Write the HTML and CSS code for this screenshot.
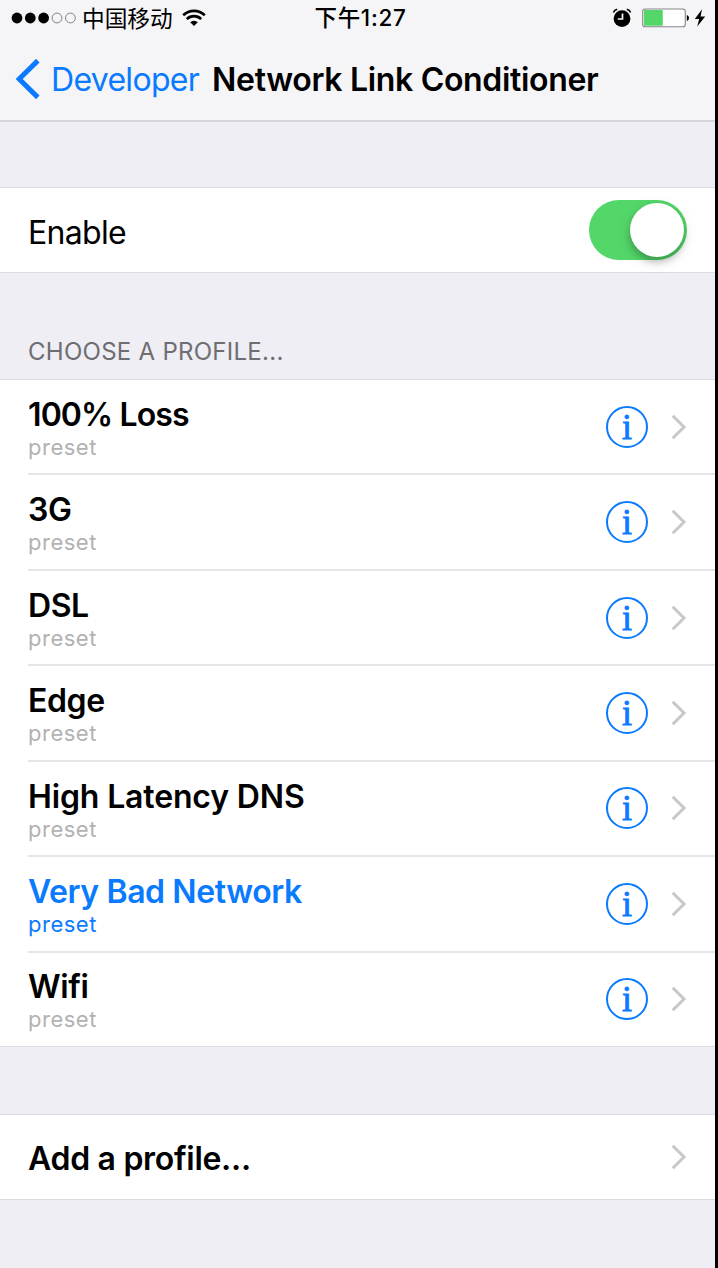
FILE: index.html
```html
<!DOCTYPE html>
<html lang="en">
<head>
    <meta charset="UTF-8">
    <meta name="viewport" content="width=device-width, initial-scale=1.0">
    <title>Network Link Conditioner</title>
    <link rel="stylesheet" href="styles.css">
</head>
<body>

    <header class="header">
        <div class="status-bar">
            <div class="status-left">
                <svg class="signal" width="66" height="12" viewBox="0 0 66 12">
                    <circle cx="6" cy="6" r="5.4"/>
                    <circle cx="19.3" cy="6" r="5.4"/>
                    <circle cx="32.6" cy="6" r="5.4"/>
                    <circle cx="46" cy="6" r="4.9" fill="none" stroke="#777" stroke-width="0.9"/>
                    <circle cx="59.4" cy="6" r="4.9" fill="none" stroke="#777" stroke-width="0.9"/>
                </svg>
                <span class="carrier">中国移动</span>
                <svg class="wifi" width="24" height="18" viewBox="0 0 24 18">
                    <path d="M1.2 6.2 A15.5 15.5 0 0 1 22.8 6.2" fill="none" stroke="#000" stroke-width="2.7"/>
                    <path d="M4.8 10.1 A10.3 10.3 0 0 1 19.2 10.1" fill="none" stroke="#000" stroke-width="2.6"/>
                    <path d="M8.2 13.2 A5.5 5.5 0 0 1 15.8 13.2 L12 17 Z"/>
                </svg>
            </div>
            <span class="time">下午1:27</span>
            <div class="status-right">
                <svg class="alarm" width="20" height="20" viewBox="0 0 20 20">
                    <circle cx="10" cy="10.6" r="8.4"/>
                    <path d="M1.4 4.6 Q2.3 2 5.2 1.3 M14.8 1.3 Q17.7 2 18.6 4.6" fill="none" stroke="#000" stroke-width="1.5"/>
                    <path d="M10.5 5.4 V11 H5.8" fill="none" stroke="#f5f5f7" stroke-width="1.7"/>
                </svg>
                <svg class="battery" width="48" height="20" viewBox="0 0 48 20">
                    <rect x="0.7" y="1" width="42.6" height="17.8" rx="2.6" fill="#fff" stroke="#85858a" stroke-width="1.1"/>
                    <rect x="1.9" y="2.1" width="18.9" height="15.6" rx="1" fill="#53d769"/>
                    <path d="M44.8 6.9 Q47 7.6 47 9.9 Q47 12.2 44.8 12.9 Z"/>
                </svg>
                <svg class="bolt" width="12" height="18" viewBox="0 0 12 18">
                    <path d="M8 0.3 L0.8 10 H5.2 L3.2 17.6 L11.2 7.4 H6.6 Z"/>
                </svg>
            </div>
        </div>
        <nav class="nav-bar">
            <svg class="back-arrow" width="26" height="40" viewBox="0 0 26 40">
                <path d="M22.8 1.6 L4.2 20 L22.8 38.4" fill="none" stroke="#0a7aff" stroke-width="5"/>
            </svg>
            <span class="back">Developer</span>
            <h1 class="title">Network Link Conditioner</h1>
        </nav>
    </header>

    <section class="group enable">
        <span class="label">Enable</span>
        <div class="switch"><div class="knob"></div></div>
    </section>

    <h2 class="group-title">CHOOSE A PROFILE...</h2>

    <section class="group profiles">
        <div class="profile">
            <div class="text">
                <div class="name loss">100% Loss</div>
                <div class="preset">preset</div>
            </div>
            <span class="info">i</span>
            <svg class="chevron" viewBox="0 0 16 26"><path d="M1.7 1.7 L13 13 L1.7 24.3"/></svg>
        </div>
        <div class="profile">
            <div class="text">
                <div class="name">3G</div>
                <div class="preset">preset</div>
            </div>
            <span class="info">i</span>
            <svg class="chevron" viewBox="0 0 16 26"><path d="M1.7 1.7 L13 13 L1.7 24.3"/></svg>
        </div>
        <div class="profile">
            <div class="text">
                <div class="name">DSL</div>
                <div class="preset">preset</div>
            </div>
            <span class="info">i</span>
            <svg class="chevron" viewBox="0 0 16 26"><path d="M1.7 1.7 L13 13 L1.7 24.3"/></svg>
        </div>
        <div class="profile">
            <div class="text">
                <div class="name">Edge</div>
                <div class="preset">preset</div>
            </div>
            <span class="info">i</span>
            <svg class="chevron" viewBox="0 0 16 26"><path d="M1.7 1.7 L13 13 L1.7 24.3"/></svg>
        </div>
        <div class="profile">
            <div class="text">
                <div class="name latency">High Latency DNS</div>
                <div class="preset">preset</div>
            </div>
            <span class="info">i</span>
            <svg class="chevron" viewBox="0 0 16 26"><path d="M1.7 1.7 L13 13 L1.7 24.3"/></svg>
        </div>
        <div class="profile selected">
            <div class="text">
                <div class="name">Very Bad Network</div>
                <div class="preset">preset</div>
            </div>
            <span class="info">i</span>
            <svg class="chevron" viewBox="0 0 16 26"><path d="M1.7 1.7 L13 13 L1.7 24.3"/></svg>
        </div>
        <div class="profile">
            <div class="text">
                <div class="name">Wifi</div>
                <div class="preset">preset</div>
            </div>
            <span class="info">i</span>
            <svg class="chevron" viewBox="0 0 16 26"><path d="M1.7 1.7 L13 13 L1.7 24.3"/></svg>
        </div>
    </section>

    <section class="group add">
        <span class="name">Add a profile...</span>
        <svg class="chevron" viewBox="0 0 16 26"><path d="M1.7 1.7 L13 13 L1.7 24.3"/></svg>
    </section>

</body>
</html>
```
FILE: styles.css
```css
* {
    box-sizing: border-box;
}

body {
    margin: 0;
    width: 718px;
    height: 1268px;
    overflow: hidden;
    background-color: #efeef4;
    border-right: 3px solid #000;
    font-family: Inter, "Noto Sans CJK SC", sans-serif;
    color: #000;
}

svg {
    display: block;
    flex-shrink: 0;
}

.header {
    height: 122px;
    background-color: #f5f5f7;
    border-bottom: 2px solid #d6d6d9;
}

.status-bar {
    display: grid;
    grid-template-columns: 1fr auto 1fr;
    height: 36px;
    padding: 0 9px 0 11px;
    align-items: center;
}

.status-left, .status-right {
    display: flex;
    align-items: center;
}

.status-right {
    justify-content: flex-end;
}

.carrier {
    margin-left: 5px;
    font-family: "Noto Sans CJK SC", sans-serif;
    font-size: 22.7px;
    line-height: 34px;
}

.wifi {
    margin-left: 9px;
}

.time {
    margin-left: 4px;
    font-size: 22.5px;
    font-weight: 500;
    line-height: 36px;
    letter-spacing: 0.7px;
}

.battery {
    margin-left: 10px;
}

.bolt {
    margin-left: 4px;
}

.nav-bar {
    display: flex;
    align-items: center;
    height: 84px;
    padding: 1px 0 0 15px;
}

.back {
    margin-left: 10px;
    padding-top: 1px;
    font-size: 32px;
    letter-spacing: -0.7px;
    color: #0a7aff;
}

.title {
    margin: 0 0 0 13px;
    padding-top: 1px;
    font-size: 32px;
    font-weight: 600;
    letter-spacing: -0.32px;
    white-space: nowrap;
}

.group {
    background-color: #fff;
    border-top: 1px solid #dcdce0;
    border-bottom: 1px solid #dcdce0;
}

.enable {
    display: flex;
    align-items: center;
    justify-content: space-between;
    height: 86px;
    margin-top: 65px;
    padding: 3px 28px 0 28px;
}

.label {
    padding-top: 1px;
    font-size: 32px;
    letter-spacing: -0.7px;
}

.switch {
    width: 98px;
    height: 60px;
    margin-top: -3px;
    padding: 3px;
    border-radius: 30px;
    background-color: #53d769;
}

.knob {
    width: 54px;
    height: 54px;
    margin-left: auto;
    border-radius: 50%;
    background-color: #fff;
    box-shadow: 0 5px 7px rgba(0, 0, 0, 0.22), 0 4px 16px rgba(0, 0, 0, 0.1);
}

.group-title {
    height: 106px;
    margin: 0;
    padding: 63px 0 0 28px;
    font-size: 24px;
    font-weight: 400;
    line-height: 32px;
    letter-spacing: 0.27px;
    color: #6d6d72;
}

.profiles {
    height: 668px;
    padding-left: 28px;
}

.profile {
    display: flex;
    align-items: center;
    height: 95.43px;
    padding-right: 28px;
    border-bottom: 2px solid #e6e6e8;
}

.profile:last-child {
    border-bottom-color: transparent;
}

.text {
    flex: 1;
    padding-top: 3.4px;
}

.name {
    font-size: 32px;
    font-weight: 600;
    line-height: 38px;
    letter-spacing: -0.4px;
}

.name.loss {
    letter-spacing: -0.9px;
}

.name.latency {
    letter-spacing: -0.15px;
}

.preset {
    font-size: 22px;
    line-height: 27px;
    letter-spacing: 0.5px;
    color: #b2b2b2;
}

.selected .name, .selected .preset {
    color: #0a7aff;
}

.info {
    width: 42px;
    height: 42px;
    border: 2px solid #0a7aff;
    border-radius: 50%;
    font-family: "Liberation Serif", serif;
    font-size: 36px;
    line-height: 39px;
    text-align: center;
    color: #0a7aff;
    -webkit-text-stroke: 0.8px #0a7aff;
}

.chevron {
    width: 16px;
    height: 26px;
    margin-left: 23px;
    fill: none;
    stroke: #c7c7cc;
    stroke-width: 3;
}

.add {
    display: flex;
    align-items: center;
    justify-content: space-between;
    height: 86px;
    margin-top: 67px;
    padding: 0 28px;
}

.add .name {
    padding-top: 4px;
    letter-spacing: -0.3px;
}
```
